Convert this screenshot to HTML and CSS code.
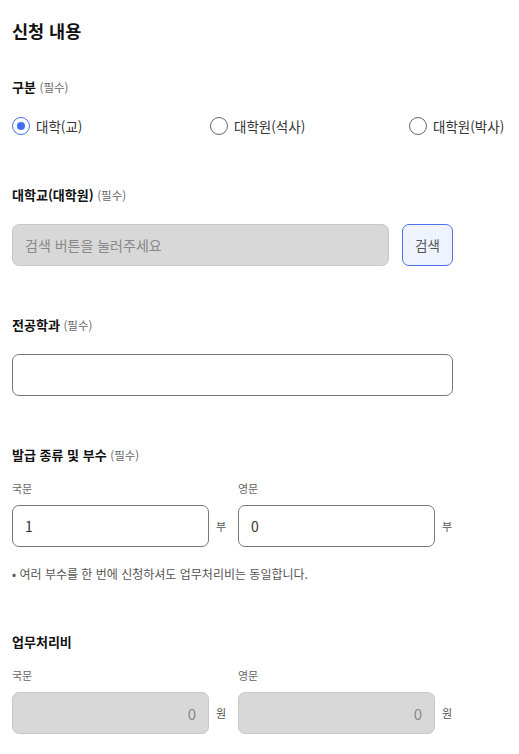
FILE: index.html
```html
<!DOCTYPE html>
<html lang="ko">
<head>
<meta charset="utf-8">
<link rel="stylesheet" href="styles.css">
</head>
<body>
<main class="page">
  <h2 class="title">신청 내용</h2>

  <section class="sec sec-first">
    <div class="label">구분 <span class="req">(필수)</span></div>
    <div class="radios">
      <label class="radio"><span class="dot checked"></span><span>대학(교)</span></label>
      <label class="radio"><span class="dot"></span><span>대학원(석사)</span></label>
      <label class="radio"><span class="dot"></span><span>대학원(박사)</span></label>
    </div>
  </section>

  <section class="sec">
    <div class="label">대학교(대학원) <span class="req">(필수)</span></div>
    <div class="search-row">
      <div class="input disabled placeholder">검색 버튼을 눌러주세요</div>
      <button class="btn">검색</button>
    </div>
  </section>

  <section class="sec">
    <div class="label">전공학과 <span class="req">(필수)</span></div>
    <div class="input wide"></div>
  </section>

  <section class="sec">
    <div class="label">발급 종류 및 부수 <span class="req">(필수)</span></div>
    <div class="pair">
      <div class="field">
        <div class="sub">국문</div>
        <div class="row"><div class="input small">1</div><span class="unit">부</span></div>
      </div>
      <div class="field">
        <div class="sub">영문</div>
        <div class="row"><div class="input small">0</div><span class="unit">부</span></div>
      </div>
    </div>
    <p class="note">• 여러 부수를 한 번에 신청하셔도 업무처리비는 동일합니다.</p>
  </section>

  <section class="sec">
    <div class="label">업무처리비</div>
    <div class="pair">
      <div class="field">
        <div class="sub">국문</div>
        <div class="row"><div class="input small disabled right">0</div><span class="unit">원</span></div>
      </div>
      <div class="field">
        <div class="sub">영문</div>
        <div class="row"><div class="input small disabled right">0</div><span class="unit">원</span></div>
      </div>
    </div>
  </section>
</main>
</body>
</html>
```

FILE: styles.css
```css
* { box-sizing: border-box; }
html, body { margin: 0; padding: 0; background: #fff; }
body {
  font-family: "Noto Sans CJK KR", "Noto Sans", sans-serif;
  color: #222;
}
.page { padding: 19px 12px 20px 12px; width: 519px; overflow: hidden; }
.title {
  margin: 0;
  font-size: 17.5px;
  line-height: 24px;
  font-weight: 700;
  color: #111;
}
.sec { margin-top: 49px; }
.sec-first { margin-top: 34px; }
.label {
  font-size: 13px;
  line-height: 20px;
  font-weight: 700;
  color: #111;
  margin-bottom: 19px;
}
.req { font-size: 11.5px; font-weight: 400; color: #666; }
.radios {
  display: grid;
  grid-template-columns: 198px 199px auto;
  height: 20px;
}
.radio {
  display: flex;
  align-items: center;
  gap: 6px;
  font-size: 13.5px;
  color: #333;
  line-height: 20px;
}
.dot {
  width: 18px; height: 18px;
  border-radius: 50%;
  border: 1.5px solid #666;
  display: flex; align-items: center; justify-content: center;
  flex: none;
}
.dot.checked { border-color: #3f6ff0; }
.dot.checked::after {
  content: "";
  width: 8px; height: 8px; border-radius: 50%;
  background: #3f6ff0;
}
.input {
  height: 42px;
  border: 1px solid #777;
  border-radius: 7px;
  background: #fff;
  display: flex;
  align-items: center;
  padding: 0 12px;
  font-size: 14px;
  color: #333;
}
.input.disabled { background: #d8d8d8; border-color: #c8c8c8; color: #888; }
.placeholder { color: #9a9a9a; font-size: 14px; }
.search-row { display: flex; gap: 13px; }
.search-row .input { width: 377px; }
.btn {
  width: 51px; height: 42px;
  border: 1px solid #4b72e6;
  border-radius: 7px;
  background: #eff3ff;
  color: #555;
  font-family: inherit;
  font-size: 13.5px;
  padding: 0;
}
.wide { width: 441px; }
.pair { display: flex; }
.field { width: 226px; }
.sub {
  font-size: 11px;
  line-height: 16px;
  color: #666;
  margin: -4px 0 9px;
}
.row { display: flex; align-items: center; gap: 7px; }
.input.small { width: 197px; }
.input.right { justify-content: flex-end; padding-right: 12px; font-size: 15px; }
.unit { font-size: 11px; color: #555; }
.note {
  margin: 18px 0 1px;
  font-size: 12px;
  line-height: 18px;
  color: #555;
}
```
